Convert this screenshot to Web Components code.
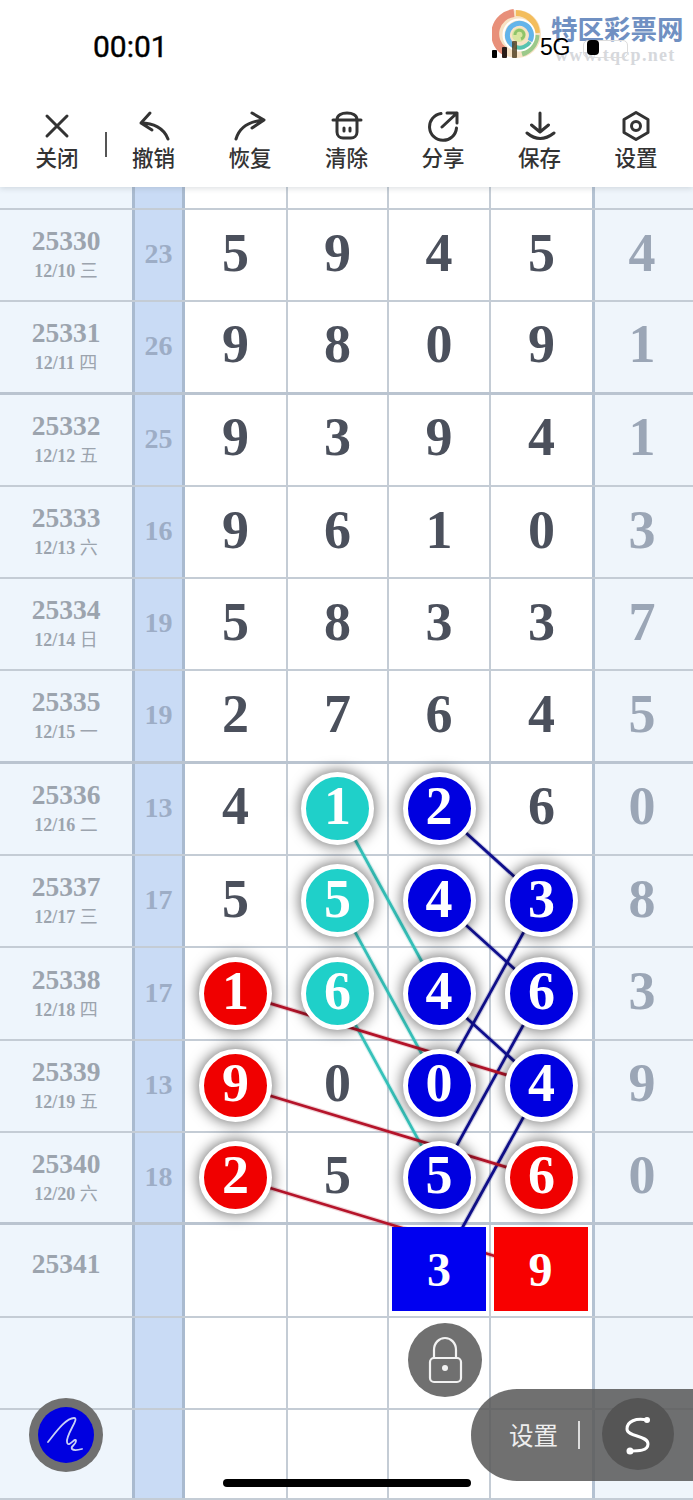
<!DOCTYPE html>
<html lang="zh">
<head>
<meta charset="utf-8">
<title>走势图</title>
<style>
	html, body { margin: 0; padding: 0; background: #fff; }
	body { width: 693px; height: 1500px; overflow: hidden; position: relative; font-family: "Liberation Sans", "Noto Sans CJK SC", sans-serif; }
	app-header { position: relative; z-index: 5; }
</style>
</head>
<body>
<app-header>
	<status-bar time="00:01"></status-bar>
	<tool-bar>
		<tool-item label="关闭" icon="close" sep></tool-item>
		<tool-item label="撤销" icon="undo"></tool-item>
		<tool-item label="恢复" icon="redo"></tool-item>
		<tool-item label="清除" icon="clear"></tool-item>
		<tool-item label="分享" icon="share"></tool-item>
		<tool-item label="保存" icon="save"></tool-item>
		<tool-item label="设置" icon="gear"></tool-item>
	</tool-bar>
</app-header>

<lotto-chart>
	<lotto-row h="23"><lotto-num></lotto-num><lotto-num></lotto-num><lotto-num></lotto-num><lotto-num></lotto-num></lotto-row>
	<lotto-row issue="25330" date="12/10 三" sum="23" last="4"><lotto-num>5</lotto-num><lotto-num>9</lotto-num><lotto-num>4</lotto-num><lotto-num>5</lotto-num></lotto-row>
	<lotto-row issue="25331" date="12/11 四" sum="26" last="1" thick><lotto-num>9</lotto-num><lotto-num>8</lotto-num><lotto-num>0</lotto-num><lotto-num>9</lotto-num></lotto-row>
	<lotto-row issue="25332" date="12/12 五" sum="25" last="1"><lotto-num>9</lotto-num><lotto-num>3</lotto-num><lotto-num>9</lotto-num><lotto-num>4</lotto-num></lotto-row>
	<lotto-row issue="25333" date="12/13 六" sum="16" last="3"><lotto-num>9</lotto-num><lotto-num>6</lotto-num><lotto-num>1</lotto-num><lotto-num>0</lotto-num></lotto-row>
	<lotto-row issue="25334" date="12/14 日" sum="19" last="7"><lotto-num>5</lotto-num><lotto-num>8</lotto-num><lotto-num>3</lotto-num><lotto-num>3</lotto-num></lotto-row>
	<lotto-row issue="25335" date="12/15 一" sum="19" last="5" thick><lotto-num>2</lotto-num><lotto-num>7</lotto-num><lotto-num>6</lotto-num><lotto-num>4</lotto-num></lotto-row>
	<lotto-row issue="25336" date="12/16 二" sum="13" last="0"><lotto-num>4</lotto-num><lotto-num kind="teal">1</lotto-num><lotto-num kind="blue">2</lotto-num><lotto-num>6</lotto-num></lotto-row>
	<lotto-row issue="25337" date="12/17 三" sum="17" last="8"><lotto-num>5</lotto-num><lotto-num kind="teal">5</lotto-num><lotto-num kind="blue">4</lotto-num><lotto-num kind="blue">3</lotto-num></lotto-row>
	<lotto-row issue="25338" date="12/18 四" sum="17" last="3"><lotto-num kind="red">1</lotto-num><lotto-num kind="teal">6</lotto-num><lotto-num kind="blue">4</lotto-num><lotto-num kind="blue">6</lotto-num></lotto-row>
	<lotto-row issue="25339" date="12/19 五" sum="13" last="9"><lotto-num kind="red">9</lotto-num><lotto-num>0</lotto-num><lotto-num kind="blue">0</lotto-num><lotto-num kind="blue">4</lotto-num></lotto-row>
	<lotto-row issue="25340" date="12/20 六" sum="18" last="0" thick><lotto-num kind="red">2</lotto-num><lotto-num>5</lotto-num><lotto-num kind="blue">5</lotto-num><lotto-num kind="red">6</lotto-num></lotto-row>
	<lotto-row issue="25341"><lotto-num></lotto-num><lotto-num></lotto-num><lotto-num kind="sq-blue">3</lotto-num><lotto-num kind="sq-red">9</lotto-num></lotto-row>
	<lotto-row><lotto-num></lotto-num><lotto-num></lotto-num><lotto-num></lotto-num><lotto-num></lotto-num></lotto-row>
	<lotto-row h="90"><lotto-num></lotto-num><lotto-num></lotto-num><lotto-num></lotto-num><lotto-num></lotto-num></lotto-row>
</lotto-chart>

<float-controls></float-controls>

<script>
class AppHeader extends HTMLElement {
	connectedCallback() {
		const shadow = this.attachShadow({ mode: "open" });
		shadow.innerHTML = `
			<style>
				:host { display: block; height: 187px; background: #fff; box-shadow: 0 2px 5px rgba(120,130,140,.22); }
			</style>
			<slot></slot>
		`;
	}
}

class StatusBar extends HTMLElement {
	connectedCallback() {
		const shadow = this.attachShadow({ mode: "open" });
		shadow.innerHTML = `
			<style>
				:host { display: flex; height: 95px; position: relative; box-sizing: border-box; padding: 30px 0 0 93px; font-family: "Liberation Sans", sans-serif; color: #000; }
				.time { font-family: Roboto, "Liberation Sans", sans-serif; font-weight: 400; -webkit-text-stroke: .4px #000; font-size: 30px; line-height: 34px; height: 34px; }
				.right { position: absolute; left: 492px; top: 36px; z-index: 2; display: flex; align-items: flex-end; height: 22px; }
				.bars { display: flex; align-items: flex-end; gap: 5px; height: 17px; width: 48px; }
				.bars i { display: block; width: 5px; background: #000; border-radius: 1px; }
				.bars i:nth-child(2) { background: #2a1c18; }
				.bars i:nth-child(3) { background: #4b3a1c; opacity: .8; }
				.net { font-size: 23px; line-height: 22px; letter-spacing: -.4px; width: 43px; }
				.batt { position: relative; width: 45px; height: 18px; box-sizing: border-box; border: 1.5px solid #dcdcdc; border-radius: 5px; }
				.batt i { position: absolute; left: 3px; top: -1px; width: 12px; height: 15px; background: #000; border-radius: 4px; }
				.mark { position: absolute; left: 492px; top: 9px; width: 195px; height: 56px; }
				.logo { position: absolute; left: 0; top: 0; }
				.name { position: absolute; left: 59px; top: 2px; font: bold 26.5px/34px "Noto Sans CJK SC", sans-serif; color: #7090c2; white-space: nowrap; }
				.site { position: absolute; left: 63px; top: 36px; font: bold 18px/20px "Liberation Serif", serif; letter-spacing: 1.3px; color: #d6d8dc; white-space: nowrap; }
			</style>
			<span class="time">${this.getAttribute("time")}</span>
			<div class="right">
				<div class="bars"><i style="height:8px"></i><i style="height:11px"></i><i style="height:17px"></i></div>
				<span class="net">5G</span>
				<div class="batt"><i></i></div>
			</div>
			<div class="mark">
				<svg class="logo" width="54" height="52" viewBox="0 0 54 52" fill="none">
					<circle cx="25" cy="25" r="24" fill="#f8e3c6"/>
					<path d="M22 4A21 21 0 0 0 12 42" stroke="#e8907a" stroke-width="8"/>
					<path d="M24 4A21 21 0 0 1 45 24" stroke="#f3bd5c" stroke-width="6"/>
					<path d="M45 26A21 21 0 0 1 30 45" stroke="#9cc98a" stroke-width="5"/>
					<circle cx="27" cy="26" r="15.500" stroke="#fff" stroke-width="2"/>
					<path d="M38 32A12 12 0 1 0 22 37" stroke="#63b4ea" stroke-width="5"/>
					<path d="M24 38A12 12 0 0 0 38 33" stroke="#58c3b0" stroke-width="4"/>
					<circle cx="27" cy="26" r="7" fill="#d9e6a0"/>
					<path d="M23 26a4.500 4.500 0 1 1 6 4" stroke="#8fc46a" stroke-width="3"/>
				</svg>
				<span class="name">特区彩票网</span>
				<span class="site">www.tqcp.net</span>
			</div>
		`;
	}
}

class ToolBar extends HTMLElement {
	connectedCallback() {
		const shadow = this.attachShadow({ mode: "open" });
		shadow.innerHTML = `
			<style>
				:host { display: grid; grid-template-columns: repeat(7, 1fr); height: 92px; padding: 0 8.75px; box-sizing: border-box; }
			</style>
			<slot></slot>
		`;
	}
}

const TOOL_ICONS = {
	close: `<path d="M6 6 26 26M26 6 6 26"/>`,
	undo: `<path d="M12 3 3 13l11 7M3 13c12 0 23 5 27 16"/>`,
	redo: `<path d="M18 3l12 7-12 8M30 10C18 11 6 15 2 29"/>`,
	clear: `<path d="M2 10h28M6 10C6 5 11 3 16 3s10 2 10 7M6 10v12c0 4 3 6 6 6h8c3 0 6-2 6-6V10M13 18v3M19 18v3"/>`,
	share: `<path d="M14 3.500A13.500 13.500 0 1 0 29.500 18M15 17 30 3M20 3h10v10"/>`,
	save: `<path d="M16 3v18M7.500 15l8.500 7 8.500-7M3 23q13 11 27 0"/>`,
	gear: `<path d="M16 2.500 28 9.500v13l-12 7-12-7v-13Z"/><circle cx="16" cy="16" r="4.500"/>`
};

class ToolItem extends HTMLElement {
	connectedCallback() {
		const shadow = this.attachShadow({ mode: "open" });
		const icon = TOOL_ICONS[this.getAttribute("icon")];
		shadow.innerHTML = `
			<style>
				:host { display: flex; flex-direction: column; align-items: center; position: relative; padding-top: 15px; color: #333; }
				svg { display: block; width: 32px; height: 32px; fill: none; stroke: #333; stroke-width: 3; stroke-linecap: round; stroke-linejoin: round; }
				span { font: 500 21.500px/30px "Noto Sans CJK SC", sans-serif; }
				.sep { position: absolute; right: -1.500px; top: 37px; width: 1.500px; height: 25px; background: #555; }
			</style>
			${icon ? `<svg viewBox="0 0 32 32">${icon}</svg>` : ""}
			<span>${this.getAttribute("label")}</span>
			${this.hasAttribute("sep") ? `<i class="sep"></i>` : ""}
		`;
	}
}

// links between balls, as [col, row] pairs: row 0 is 25336
const COL_X = [236, 338, 439, 541];
const ROW_Y = [808.5, 900.8, 993, 1085.4, 1177.7, 1270];
const LINKS = {
	"#36c2ba": [[1, 0, 2, 2], [1, 1, 2, 3], [1, 2, 2, 4]],
	"#10108e": [[2, 0, 3, 1], [2, 1, 3, 2], [2, 2, 3, 3], [3, 1, 2, 3], [3, 2, 2, 4], [3, 3, 2, 5]],
	"#b5142a": [[0, 2, 3, 3], [0, 3, 3, 4], [0, 4, 3, 5]]
};

class LottoChart extends HTMLElement {
	connectedCallback() {
		const shadow = this.attachShadow({ mode: "open" });
		let lines = "";
		for (const [colour, list] of Object.entries(LINKS)) {
			for (const [c1, r1, c2, r2] of list) {
				const ends = `x1="${COL_X[c1]}" y1="${ROW_Y[r1]}" x2="${COL_X[c2]}" y2="${ROW_Y[r2]}"`;
				lines += `<line ${ends} stroke="${colour}" stroke-width="5" opacity=".18"/><line ${ends} stroke="${colour}" stroke-width="2.800"/>`;
			}
		}
		shadow.innerHTML = `
			<style>
				:host { display: block; position: relative; height: 1313px; overflow: hidden; }
				svg { position: absolute; left: 0; top: 0; z-index: 1; pointer-events: none; }
			</style>
			<slot></slot>
			<svg width="693" height="1313" viewBox="0 187 693 1313">${lines}</svg>
		`;
	}
}

class LottoRow extends HTMLElement {
	connectedCallback() {
		const shadow = this.attachShadow({ mode: "open" });
		const h = this.getAttribute("h") || "92.300";
		const issue = this.getAttribute("issue") || "";
		const date = this.getAttribute("date") || "";
		const line = this.hasAttribute("thick") ? "3px solid #bac4d0" : "2px solid #c4ccd5";
		shadow.innerHTML = `
			<style>
				:host { display: grid; grid-template-columns: 132px 53px 103px 101px 102px 101px 101px; height: ${h}px; box-sizing: border-box; border-bottom: ${line}; font-family: "Liberation Serif", "Noto Sans CJK SC", serif; font-weight: bold; }
				.info { background: #eef5fc; display: flex; flex-direction: column; align-items: center; justify-content: center; color: #9ca4ae; padding-bottom: ${date ? 2 : 12}px; }
				.issue { font-size: 27.500px; line-height: 30px; }
				.date { font-size: 18px; line-height: 22px; font-weight: bold; margin-top: 2px; }
				.date span { font-family: "Noto Sans CJK SC", sans-serif; font-weight: 400; }
				.sum { background: #c9dbf5; box-sizing: border-box; border-left: 3px solid #a9bacf; border-right: 3px solid #a9bacf; display: flex; align-items: center; justify-content: center; color: #9dadc6; font-size: 28px; padding-bottom: 2px; }
				.last { background: #eff5fb; box-sizing: border-box; border-left: 3px solid #b4c2d2; display: flex; align-items: center; justify-content: center; color: #9ba6b6; font-size: 54px; padding: 0 4px 5px 0; }
			</style>
			<div class="info">
				${issue ? `<div class="issue">${issue}</div>` : ""}
				${date ? `<div class="date">${date.split(" ")[0]} <span>${date.split(" ")[1]}</span></div>` : ""}
			</div>
			<div class="sum">${this.getAttribute("sum") || ""}</div>
			<slot></slot>
			<div class="last">${this.getAttribute("last") || ""}</div>
		`;
	}
}

class LottoNum extends HTMLElement {
	connectedCallback() {
		const shadow = this.attachShadow({ mode: "open" });
		const kind = this.getAttribute("kind") || "";
		const pad = kind === "" ? 5 : kind.startsWith("sq") ? 3 : 3;
		shadow.innerHTML = `
			<style>
				:host { display: flex; align-items: center; justify-content: center; box-sizing: border-box; border-right: 2px solid #c4ccd5; position: relative; font: bold 54px/1 "Liberation Serif", serif; color: #4b505c; padding-bottom: ${pad}px; }
				:host(:last-of-type) { border-right: 0; }
				.ball { position: relative; z-index: 2; box-sizing: border-box; width: 73px; height: 73px; margin-top: 2px; border: 5px solid #fff; border-radius: 50%; display: flex; align-items: center; justify-content: center; color: #fff; box-shadow: 0 0 13px 2px rgba(0,0,0,.5); padding-bottom: 4px; }
				.teal { background: #1fd0c9; }
				.blue { background: #0000e0; }
				.red { background: #f00000; }
				.sq { position: relative; z-index: 2; box-sizing: border-box; width: 94px; height: 84px; margin-top: 1px; display: flex; align-items: center; justify-content: center; color: #fff; font-size: 48px; padding-top: 2px; }
				.sq-blue { background: #0000f0; }
				.sq-red { background: #f80000; margin-right: 2px; }
			</style>
			${kind === "" ? `<slot></slot>` : kind.startsWith("sq") ? `<div class="sq ${kind}"><slot></slot></div>` : `<div class="ball ${kind}"><slot></slot></div>`}
		`;
	}
}

class FloatControls extends HTMLElement {
	connectedCallback() {
		const shadow = this.attachShadow({ mode: "open" });
		shadow.innerHTML = `
			<style>
				:host { display: block; position: absolute; left: 0; top: 0; width: 693px; height: 1500px; z-index: 4; pointer-events: none; }
				.pen { position: absolute; left: 29px; top: 1398px; width: 74px; height: 74px; border-radius: 50%; background: #707070; display: flex; align-items: center; justify-content: center; }
				.pen div { width: 56px; height: 56px; border-radius: 50%; background: #0000e0; }
				.lock { position: absolute; left: 408px; top: 1323px; width: 74px; height: 74px; border-radius: 50%; background: #707070; }
				.pill { position: absolute; left: 471px; top: 1389px; width: 222px; height: 92px; border-radius: 46px 0 0 46px; background: rgba(88,88,88,.86); display: flex; align-items: center; box-sizing: border-box; padding-left: 38px; color: #eee; font: 24.500px/30px "Noto Sans CJK SC", sans-serif; }
				.pill i { width: 2px; height: 28px; background: #ddd; margin-left: 20px; }
				.s { position: absolute; left: 131px; top: 9px; width: 72px; height: 72px; border-radius: 50%; background: #555; }
				.home { position: absolute; left: 223px; top: 1479px; width: 248px; height: 8px; border-radius: 4px; background: #000; }
				svg { position: absolute; left: 0; top: 0; fill: none; }
			</style>
			<div class="pen"><div></div>
				<svg width="74" height="74" viewBox="29 1398 74 74" stroke="#c8cff6" stroke-width="1.800" stroke-linecap="round" stroke-linejoin="round">
					<path d="M48 1442C56 1432 66 1418 74 1418 80 1418 66 1434 67 1442 68 1449 76 1436 76 1441 76 1445 70 1446 72 1449 74 1451 78 1450 82 1449"/>
				</svg>
			</div>
			<div class="lock">
				<svg width="74" height="74" viewBox="408 1323 74 74" stroke="#f2f2f2" stroke-width="2.200">
					<rect x="430" y="1358" width="31" height="24" rx="4"/>
					<path d="M434 1358v-8c0-7 5-12 11-12s11 5 11 12v8"/>
					<circle cx="445" cy="1368" r="3" fill="#f2f2f2" stroke="none"/>
				</svg>
			</div>
			<div class="pill">
				<span>设置</span><i></i>
				<div class="s">
					<svg width="72" height="72" viewBox="602 1398 72 72" stroke="#fff" stroke-width="3" stroke-linecap="round">
						<path d="M647 1420C636 1418 627 1421 627 1429 627 1437 648 1435 648 1444 648 1451 638 1451 630 1451"/>
						<circle cx="647" cy="1420" r="3" fill="#fff" stroke="none"/>
						<circle cx="630" cy="1451" r="3.500" fill="#fff" stroke="none"/>
					</svg>
				</div>
			</div>
			<div class="home"></div>
		`;
	}
}

customElements.define("app-header", AppHeader);
customElements.define("status-bar", StatusBar);
customElements.define("tool-bar", ToolBar);
customElements.define("tool-item", ToolItem);
customElements.define("lotto-chart", LottoChart);
customElements.define("lotto-row", LottoRow);
customElements.define("lotto-num", LottoNum);
customElements.define("float-controls", FloatControls);
</script>
</body>
</html>
